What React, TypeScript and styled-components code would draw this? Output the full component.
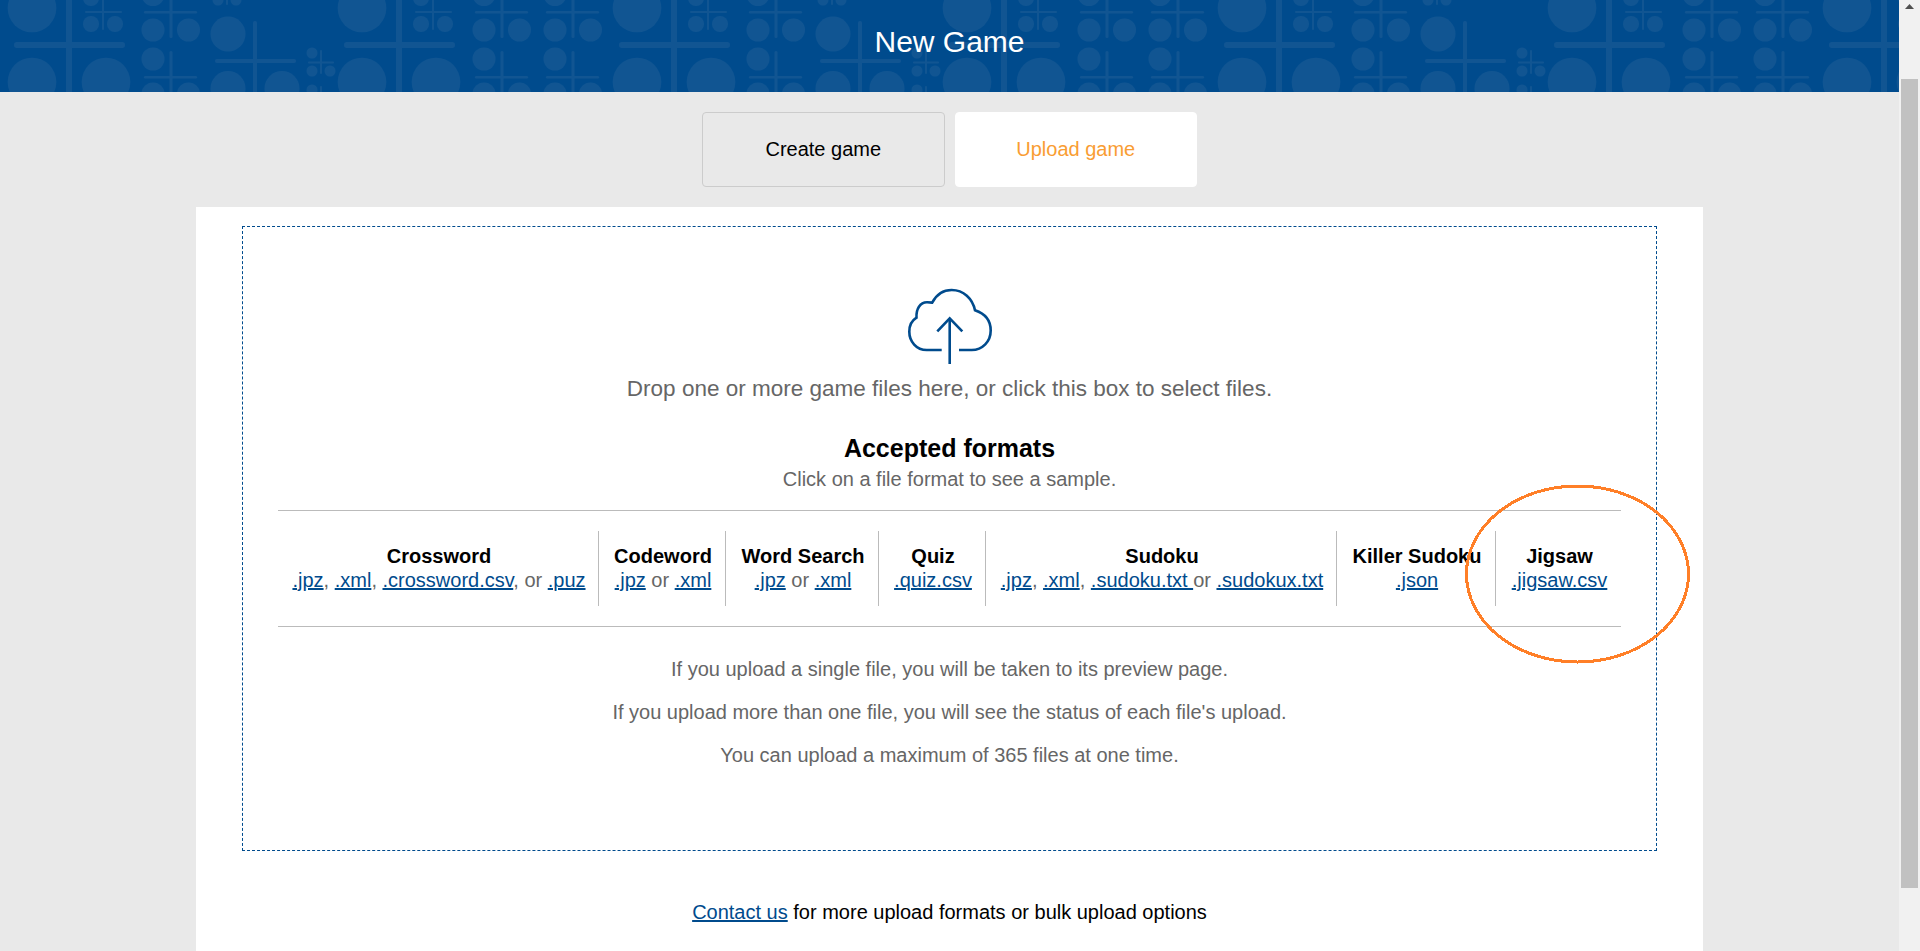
import React from "react";
import styled, { createGlobalStyle } from "styled-components";

const BLUE = "#004b8d";
const SHAPE = "#115592";

const circle = (x: number, y: number, r: number) =>
  `<circle cx="${x}" cy="${y}" r="${r}"/>`;
const bar = (x: number, y: number, w: number, h: number) =>
  `<rect x="${x}" y="${y}" width="${w}" height="${h}" rx="${Math.min(w, h) / 2}"/>`;

// big cross with three large dots and a tiny cross in the top right corner
const bigCross = (x: number) =>
  bar(x - 3, -6, 6, 110) +
  bar(x - 55, 42, 111, 6) +
  circle(x - 37, 8, 24.3) +
  circle(x - 37, 82, 24.3) +
  circle(x + 37, 82, 24.3) +
  bar(x + 33, -6, 2, 36) +
  bar(x + 16, 11, 37, 2) +
  circle(x + 22, 24, 8) +
  circle(x + 46, 24, 8) +
  circle(x + 22, -2, 8);

const doubleCross = (x: number) =>
  bar(x - 1.5, -6, 3, 44) +
  bar(x - 27, 11, 53, 2.6) +
  circle(x - 18, -5.5, 11.5) +
  circle(x - 18, 30, 11.5) +
  circle(x + 17.5, 30, 11.5) +
  bar(x - 1.5, 51, 3, 50) +
  bar(x - 27, 76, 53, 2.6) +
  circle(x - 18, 59, 11.5) +
  circle(x - 18, 94, 11.5) +
  circle(x + 17.5, 94, 11.5);

const midCross =
  bar(253, 21, 4, 80) +
  bar(215, 59, 81, 4) +
  circle(228, 34, 17.5) +
  circle(228, 88.5, 17.5) +
  circle(282, 88.5, 17.5) +
  circle(218, 0, 5.5) +
  circle(236, 0, 5.5) +
  bar(226, -6, 2, 11);

const smallCross =
  bar(320, 50, 2, 24) +
  bar(308, 61.5, 26, 2) +
  circle(312, 53, 5.5) +
  circle(312, 71, 5.5) +
  circle(330, 71, 5.5) +
  circle(312, 90, 5.5) +
  bar(320, 86, 2, 12);

const tile = `<svg xmlns="http://www.w3.org/2000/svg" width="605" height="92" fill="${SHAPE}">${
  bigCross(69) + doubleCross(171) + midCross + smallCross + bigCross(399) + doubleCross(502) + doubleCross(573)
}</svg>`;

const GlobalStyle = createGlobalStyle`
  html, body {
    margin: 0;
    height: 100%;
    overflow: hidden;
  }
  body {
    font-family: "Liberation Sans", Arial, sans-serif;
    background: #e9e9e9;
  }
`;

const Shell = styled.div`
  display: flex;
  height: 100vh;
  overflow: hidden;
`;

const Page = styled.div`
  flex: 1;
  min-width: 0;
  background: #e9e9e9;
`;

const Scrollbar = styled.aside`
  width: 21px;
  flex: none;
  background: #f1f1f1;
  display: flex;
  flex-direction: column;
  align-items: center;
`;

const ScrollArrow = styled.svg`
  display: block;
  margin-top: 4px;
`;

const ScrollThumb = styled.div`
  width: 17px;
  height: 809px;
  margin-top: 70px;
  background: #c1c1c1;
`;

const Header = styled.header`
  height: 92px;
  display: flex;
  align-items: center;
  justify-content: center;
  background-color: ${BLUE};
  background-image: url("data:image/svg+xml,${encodeURIComponent(tile)}");
  background-repeat: repeat-x;
`;

const Title = styled.h1`
  margin: -8px 0 0;
  font-size: 30px;
  font-weight: 400;
  color: #fff;
`;

const Tabs = styled.div`
  display: flex;
  justify-content: center;
  gap: 10px;
  padding: 20px 0;
`;

const Tab = styled.button<{ $active?: boolean }>`
  flex: 0 0 242.5px;
  height: 75px;
  box-sizing: border-box;
  font: 20px "Liberation Sans", Arial, sans-serif;
  border-radius: 4px;
  border: 1px solid ${(p) => (p.$active ? "#fff" : "#ccc")};
  background: ${(p) => (p.$active ? "#fff" : "#e9e9e9")};
  color: ${(p) => (p.$active ? "#f99d33" : "#000")};
`;

const Panel = styled.main`
  position: relative;
  width: 1507px;
  height: 760px;
  margin: 0 auto;
  padding: 19px 46px 0;
  box-sizing: border-box;
  background: #fff;
`;

const DropBox = styled.section`
  height: 625px;
  box-sizing: border-box;
  padding: 58px 35px 0;
  border: 1px dashed ${BLUE};
  text-align: center;
  color: #666;
`;

const CloudIcon = styled.svg`
  display: block;
  margin: 0 auto;
`;

const DropText = styled.p`
  margin: 10px 0 0;
  font-size: 22.5px;
  line-height: 28px;
`;

const FormatsTitle = styled.h2`
  margin: 30px 0 0;
  font-size: 25px;
  line-height: 30px;
  font-weight: 700;
  color: #000;
`;

const FormatsHint = styled.p`
  margin: 4px 0 19px;
  font-size: 20px;
  line-height: 24px;
`;

const FormatsGrid = styled.div`
  display: grid;
  grid-template-columns: 320px 127px 153px 107px 351px 159px 126px;
  padding: 20px 0;
  border-top: 1px solid #bbb;
  border-bottom: 1px solid #bbb;
`;

const FormatCell = styled.div`
  height: 75px;
  box-sizing: border-box;
  padding: 13px 0 0 2px;
  font-size: 20px;
  line-height: 24px;
  white-space: nowrap;

  & + & {
    border-left: 1px solid #bbb;
  }
`;

const FormatName = styled.div`
  font-weight: 700;
  color: #000;
`;

const SampleLink = styled.a`
  color: ${BLUE};
  text-decoration: underline;
`;

const Notes = styled.div`
  margin-top: 31px;
`;

const Note = styled.p`
  margin: 0 0 20px;
  font-size: 20px;
  line-height: 23px;
`;

const ContactLine = styled.p`
  margin: 50px 0 0;
  font-size: 20px;
  line-height: 23px;
  text-align: center;
  color: #000;
`;

const Annotation = styled.svg`
  position: absolute;
  left: 1269px;
  top: 277px;
  pointer-events: none;
`;

const formats: { name: string; parts: (string | [string])[] }[] = [
  { name: "Crossword", parts: [[".jpz"], ", ", [".xml"], ", ", [".crossword.csv"], ", or ", [".puz"]] },
  { name: "Codeword", parts: [[".jpz"], " or ", [".xml"]] },
  { name: "Word Search", parts: [[".jpz"], " or ", [".xml"]] },
  { name: "Quiz", parts: [[".quiz.csv"]] },
  { name: "Sudoku", parts: [[".jpz"], ", ", [".xml"], ", ", [".sudoku.txt "], "or ", [".sudokux.txt"]] },
  { name: "Killer Sudoku", parts: [[".json"]] },
  { name: "Jigsaw", parts: [[".jigsaw.csv"]] },
];

const App: React.FC = () => {
  return (
    <Shell>
      <GlobalStyle />
      <Page>
        <Header>
          <Title>New Game</Title>
        </Header>
        <Tabs>
          <Tab>Create game</Tab>
          <Tab $active>Upload game</Tab>
        </Tabs>
        <Panel>
          <DropBox>
            <CloudIcon width="100" height="80" viewBox="40 15 100 80" fill="none" stroke={BLUE} strokeWidth="2.6">
              <path d="M81.7 80H66.7C56.5 80 49.3 71.5 49.3 61.7C49.3 55.5 52 50.5 56.5 47.7C56 39 60 32.3 67 32.3C69 32.3 70.5 32.3 72.2 32.6C76.5 24.5 83.5 20 91.7 20C103.5 20 112.5 28.5 115 40.3C124.5 43.5 130.7 50.5 130.7 60.5C130.7 71.5 122.5 80 111.7 80H99" />
              <path d="M89.7 94V49" />
              <path d="M77.3 61.3L89.7 48.3L102.3 61.3" />
            </CloudIcon>
            <DropText>Drop one or more game files here, or click this box to select files.</DropText>
            <FormatsTitle>Accepted formats</FormatsTitle>
            <FormatsHint>Click on a file format to see a sample.</FormatsHint>
            <FormatsGrid>
              {formats.map((f) => (
                <FormatCell key={f.name}>
                  <FormatName>{f.name}</FormatName>
                  {f.parts.map((part, i) =>
                    typeof part === "string" ? (
                      <span key={i}>{part}</span>
                    ) : (
                      <SampleLink key={i} href="#">
                        {part[0]}
                      </SampleLink>
                    )
                  )}
                </FormatCell>
              ))}
            </FormatsGrid>
            <Notes>
              <Note>If you upload a single file, you will be taken to its preview page.</Note>
              <Note>If you upload more than one file, you will see the status of each file's upload.</Note>
              <Note>You can upload a maximum of 365 files at one time.</Note>
            </Notes>
          </DropBox>
          <ContactLine>
            <SampleLink href="#">Contact us</SampleLink> for more upload formats or bulk upload options
          </ContactLine>
          <Annotation width="228" height="182" viewBox="0 0 228 182">
            <ellipse cx="112.5" cy="90" rx="111" ry="88" fill="none" stroke="#ff7f27" strokeWidth="3" shapeRendering="crispEdges" />
          </Annotation>
        </Panel>
      </Page>
      <Scrollbar>
        <ScrollArrow width="9" height="5" viewBox="0 0 9 5">
          <path d="M4.5 0L9 5H0Z" fill="#505050" />
        </ScrollArrow>
        <ScrollThumb />
      </Scrollbar>
    </Shell>
  );
};

export default App;
